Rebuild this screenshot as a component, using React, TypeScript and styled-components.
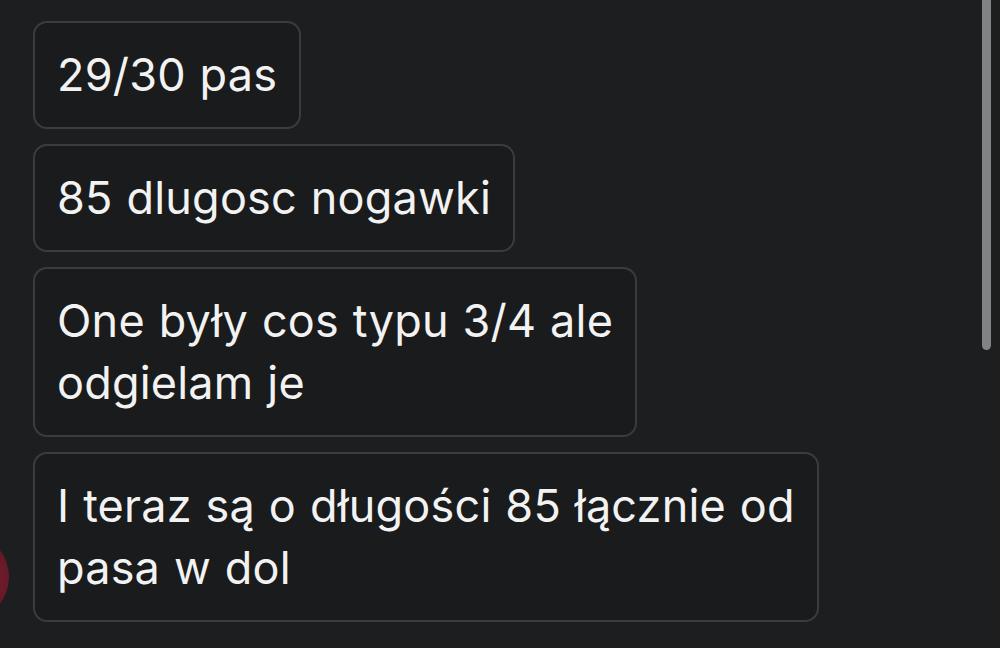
import React from "react";
import styled, { createGlobalStyle } from "styled-components";

const GlobalStyle = createGlobalStyle`
  html, body {
    margin: 0;
    padding: 0;
    background: #1c1e1f;
    overflow: hidden;
  }
  body {
    font-family: Inter, "Noto Sans", "Liberation Sans", sans-serif;
    -webkit-font-smoothing: antialiased;
  }
`;

const Screen = styled.div`
  position: relative;
  width: 1000px;
  height: 648px;
  overflow: hidden;
  background: #1c1e1f;
`;

const Thread = styled.div`
  display: flex;
  flex-direction: column;
  gap: 15px;
  padding-top: 21px;
`;

const Row = styled.div`
  display: flex;
  align-items: flex-end;
  gap: 24px;
`;

const AvatarSlot = styled.div`
  width: 9px;
  flex: none;
  display: flex;
  justify-content: flex-end;
`;

const Avatar = styled.div`
  width: 88px;
  height: 88px;
  flex: none;
  border-radius: 50%;
  margin-bottom: 1px;
  background: radial-gradient(circle at 70% 50%, #7a1f30 0%, #5a1522 60%, #3e1018 100%);
`;

const Bubble = styled.div`
  width: fit-content;
  box-sizing: border-box;
  padding: 21px 22px 21px 22px;
  border: 2px solid #3a3c3e;
  border-radius: 14px;
  background: #191b1c;
  color: #f2f2f2;
  font-size: 45px;
  line-height: 62px;
  letter-spacing: 0.2px;
  word-spacing: 1px;
  white-space: pre-line;
`;

const ScrollThumb = styled.div`
  position: absolute;
  top: -6px;
  right: 9px;
  width: 9px;
  height: 356px;
  border-radius: 5px;
  background: #808485;
`;

const messages = [
  "29/30 pas",
  "85 dlugosc nogawki",
  "One były cos typu 3/4 ale\nodgielam je",
  "I teraz są o długości 85 łącznie od\npasa w dol",
];

export default function App() {
  return (
    <Screen>
      <GlobalStyle />
      <Thread>
        {messages.map((text, i) => (
          <Row key={i}>
            <AvatarSlot>{i === messages.length - 1 && <Avatar />}</AvatarSlot>
            <Bubble>{text}</Bubble>
          </Row>
        ))}
      </Thread>
      <ScrollThumb />
    </Screen>
  );
}
